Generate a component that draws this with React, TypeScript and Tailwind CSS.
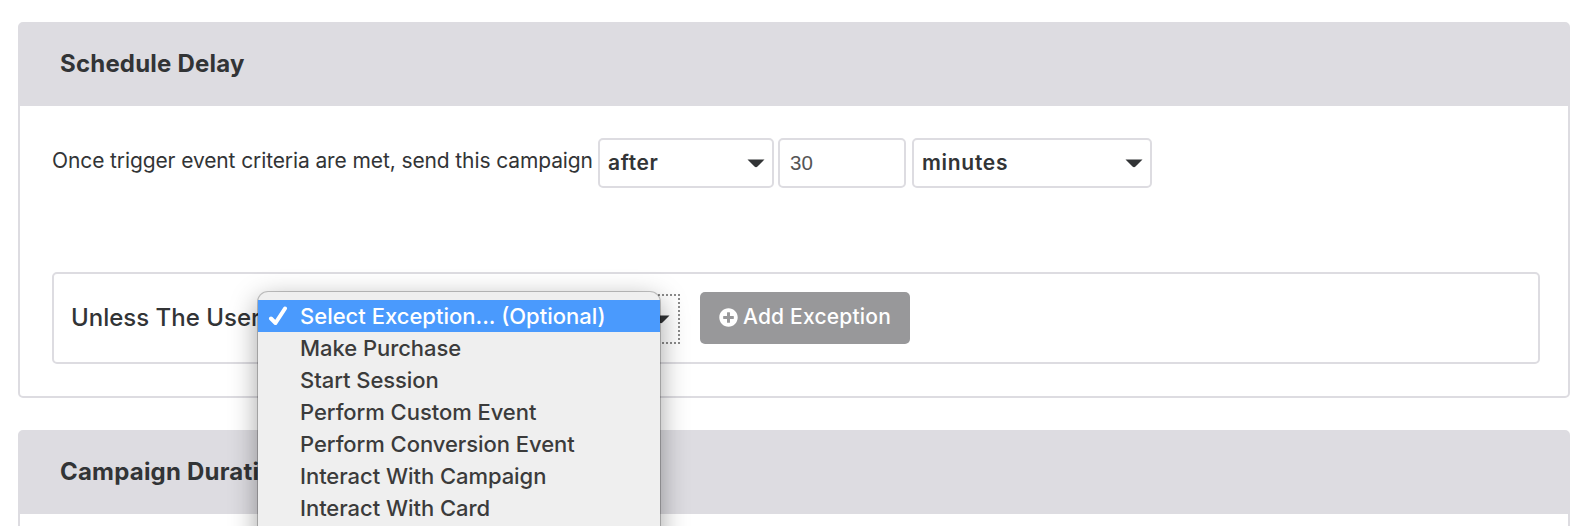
import { FaPlusCircle } from "react-icons/fa";

const exceptions = [
  "Make Purchase",
  "Start Session",
  "Perform Custom Event",
  "Perform Conversion Event",
  "Interact With Campaign",
  "Interact With Card",
];

function Caret({ className = "" }: { className?: string }) {
  return (
    <svg viewBox="0 0 18 9" className={`h-[9px] w-[18px] shrink-0 ${className}`}>
      <path d="M0.5 0.5h17Q13 5 10.5 7.6Q9 9 7.5 7.6Q5 5 0.5 0.5Z" fill="#323436" />
    </svg>
  );
}

function PanelHeader({ title }: { title: string }) {
  return (
    <header className="flex h-[82px] items-center bg-[#dddce1] pb-0.5 pl-10">
      <h2 className="whitespace-nowrap text-[24px] font-bold leading-8 tracking-[0.2px]">{title}</h2>
    </header>
  );
}

function ExceptionMenu() {
  return (
    <ul
      role="listbox"
      className="absolute -left-[5px] -top-[4px] z-10 h-[300px] w-[402px] rounded-[10px] bg-[#efefef] pt-2 text-[22px] leading-8 text-[#3b3b3b] shadow-[0_0_0_1px_rgba(0,0,0,0.22),0_8px_28px_rgba(0,0,0,0.38)]"
    >
      <li className="flex h-8 items-center bg-[#4a9afd] text-white">
        <svg viewBox="0 0 20 20" className="ml-[10px] mr-3 h-5 w-5" fill="none" stroke="currentColor" strokeWidth="4">
          <path d="M3 12.5L7.5 17L17 2.5" strokeLinecap="round" strokeLinejoin="round" />
        </svg>
        <span className="whitespace-nowrap font-[450]">Select Exception... (Optional)</span>
      </li>
      {exceptions.map((name) => (
        <li key={name} className="h-8 whitespace-nowrap pl-[42px] font-[450] tracking-[-0.05px]">
          <span>{name}</span>
        </li>
      ))}
    </ul>
  );
}

export default function App() {
  return (
    <main className="flex h-[526px] flex-col gap-8 overflow-hidden bg-white pl-[18px] pr-[18px] pt-[22px] font-['Inter',sans-serif] text-[#323436]">
      <section className="h-[376px] shrink-0 rounded-[5px] border-2 border-[#dddce1]">
        <PanelHeader title="Schedule Delay" />
        <div className="pl-8 pr-7 pt-8">
          <div className="flex h-[50px] items-center">
            <span className="mr-[6px] w-[540px] shrink-0 whitespace-nowrap pb-1 text-[21px] tracking-[-0.11px]">
              Once trigger event criteria are met, send this campaign
            </span>
            <div className="flex h-[50px] w-[176px] items-center justify-between rounded-[5px] border-2 border-[#dddce1] pl-2 pr-[7px]">
              <span className="text-[21px] font-semibold tracking-[0.6px]">after</span>
              <Caret />
            </div>
            <div className="ml-1 flex h-[50px] w-32 items-center rounded-[5px] border-2 border-[#dddce1] pl-[10px] text-[20.5px] text-[#555]">
              <span className="font-['Liberation_Sans',sans-serif]">30</span>
            </div>
            <div className="ml-[6px] flex h-[50px] w-60 items-center justify-between rounded-[5px] border-2 border-[#dddce1] pl-2 pr-[7px]">
              <span className="text-[21px] font-semibold tracking-[0.7px]">minutes</span>
              <Caret />
            </div>
          </div>
          <div className="mt-[84px] flex h-[92px] items-center rounded-[5px] border-2 border-[#dddce1] pl-[17px]">
            <span className="w-[192px] shrink-0 whitespace-nowrap text-[24px] font-medium">Unless The User</span>
            <div className="relative mt-[2px] flex h-[50px] w-[417px] items-center justify-end border-2 border-l-0 border-dotted border-[#8b8b8b] pr-2">
              <Caret />
              <ExceptionMenu />
            </div>
            <button className="ml-5 flex h-[52px] w-[210px] items-center rounded-[5px] bg-[#98989a] pb-0.5 pl-[19px] text-white">
              <FaPlusCircle className="mr-[5px] h-[19px] w-[19px] shrink-0" />
              <span className="whitespace-nowrap text-[21px] font-medium tracking-[0.2px]">Add Exception</span>
            </button>
          </div>
        </div>
      </section>
      <section className="h-[376px] shrink-0 rounded-[5px] border-2 border-[#dddce1]">
        <PanelHeader title="Campaign Duration" />
      </section>
    </main>
  );
}
